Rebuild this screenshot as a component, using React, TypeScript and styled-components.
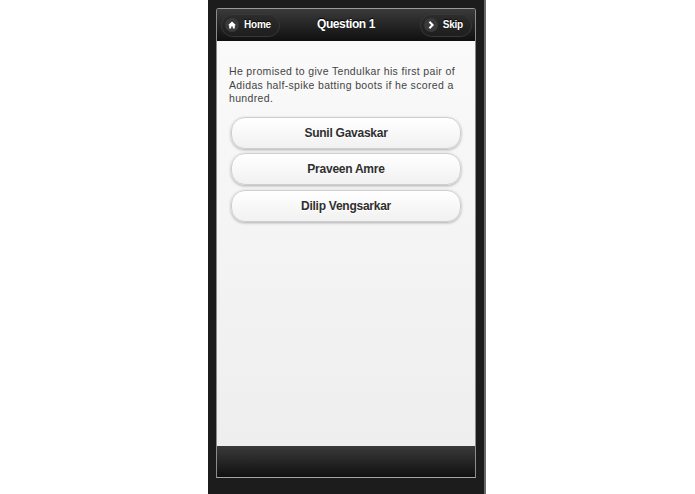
import * as React from 'react';
import styled, { createGlobalStyle } from 'styled-components';

const GlobalStyle = createGlobalStyle`
  html, body {
    margin: 0;
    padding: 0;
    background: #fff;
  }
`;

const Page = styled.div`
  height: 494px;
  overflow: hidden;
  padding-left: 208px;
`;

const Device = styled.div`
  background: #1c1c1c;
  border-right: 2px solid #6a6a6a;
  box-sizing: border-box;
  height: 494px;
  padding: 8px 8px 0 8px;
  width: 278px;
`;

const Screen = styled.div`
  border: 1px solid #8c8c8c;
  border-bottom-color: #a4a4a4;
  border-radius: 3px 3px 0 0;
  border-top-color: #9a9a9a;
  box-sizing: border-box;
  display: flex;
  flex-direction: column;
  font-family: 'Liberation Sans', Arial, sans-serif;
  height: 470px;
  overflow: hidden;
`;

const Header = styled.header`
  align-items: center;
  background: linear-gradient(#3a3a3a, #101010);
  display: flex;
  flex: none;
  height: 32px;
  justify-content: space-between;
  padding: 0 3px 0 4px;
  position: relative;
`;

const Title = styled.h1`
  color: #fff;
  font-size: 12px;
  font-weight: bold;
  left: 0;
  letter-spacing: -0.4px;
  margin: 0;
  position: absolute;
  right: 0;
  text-align: center;
  text-shadow: 0 -1px 1px #000;
  top: 8px;
`;

const NavButton = styled.a`
  align-items: center;
  background: linear-gradient(#2c2c2c, #1e1e1e);
  border: 1px solid #383838;
  border-radius: 12px;
  box-sizing: border-box;
  color: #fff;
  display: flex;
  font-size: 10px;
  font-weight: bold;
  gap: 5px;
  height: 23px;
  letter-spacing: -0.2px;
  line-height: 19px;
  padding: 0 8px 0 3px;
  position: relative;
  text-shadow: 0 -1px 1px #000;
  z-index: 1;
`;

const NavLabel = styled.span`
  margin-top: -2px;
`;

const IconDisc = styled.span`
  align-items: center;
  background: #3a3a3a;
  border-radius: 50%;
  display: flex;
  height: 14px;
  justify-content: center;
  width: 14px;
`;

const Content = styled.main`
  background: linear-gradient(#fafafa, #eeeeee);
  flex: 1;
  padding: 24px 12px 0;
`;

const Question = styled.p`
  color: #444;
  font-size: 10.5px;
  letter-spacing: 0.34px;
  line-height: 13.5px;
  margin: 0 0 11px;
`;

const Answers = styled.div`
  display: flex;
  flex-direction: column;
  gap: 4.5px;
  padding: 0 2px;
`;

const Answer = styled.button`
  background: linear-gradient(#ffffff, #f1f1f1);
  border: 1px solid #cfcfcf;
  border-radius: 14px;
  box-shadow: 0 1px 3px rgba(0, 0, 0, 0.3);
  box-sizing: border-box;
  color: #2f2f2f;
  font-family: inherit;
  font-size: 12px;
  font-weight: bold;
  height: 32px;
  letter-spacing: -0.25px;
  padding: 0;
  text-shadow: 0 1px 0 #fff;
  width: 100%;
`;

const Footer = styled.footer`
  background: linear-gradient(#3a3a3a, #101010);
  flex: none;
  height: 31px;
`;

const HomeIcon = () => (
  <svg width="8" height="8" viewBox="0 0 8 8" aria-hidden="true">
    <path d="M4 .6 0 4.2h1.2V7.6h2V5.4h1.6v2.2h2V4.2H8z" fill="#fff" />
  </svg>
);

const ChevronIcon = () => (
  <svg width="8" height="8" viewBox="0 0 8 8" aria-hidden="true">
    <path d="M2.4 .8 5.6 4 2.4 7.2" fill="none" stroke="#fff" strokeWidth="2" />
  </svg>
);

const answers = ['Sunil Gavaskar', 'Praveen Amre', 'Dilip Vengsarkar'];

const App = () => (
  <Page>
    <GlobalStyle />
    <Device>
      <Screen>
        <Header>
          <NavButton>
            <IconDisc>
              <HomeIcon />
            </IconDisc>
            <NavLabel>Home</NavLabel>
          </NavButton>
          <Title>Question 1</Title>
          <NavButton>
            <IconDisc>
              <ChevronIcon />
            </IconDisc>
            <NavLabel>Skip</NavLabel>
          </NavButton>
        </Header>
        <Content>
          <Question>
            He promised to give Tendulkar his first pair of Adidas half-spike batting boots if he scored a hundred.
          </Question>
          <Answers>
            {answers.map(answer => (
              <Answer key={answer}>{answer}</Answer>
            ))}
          </Answers>
        </Content>
        <Footer />
      </Screen>
    </Device>
  </Page>
);

export default App;
